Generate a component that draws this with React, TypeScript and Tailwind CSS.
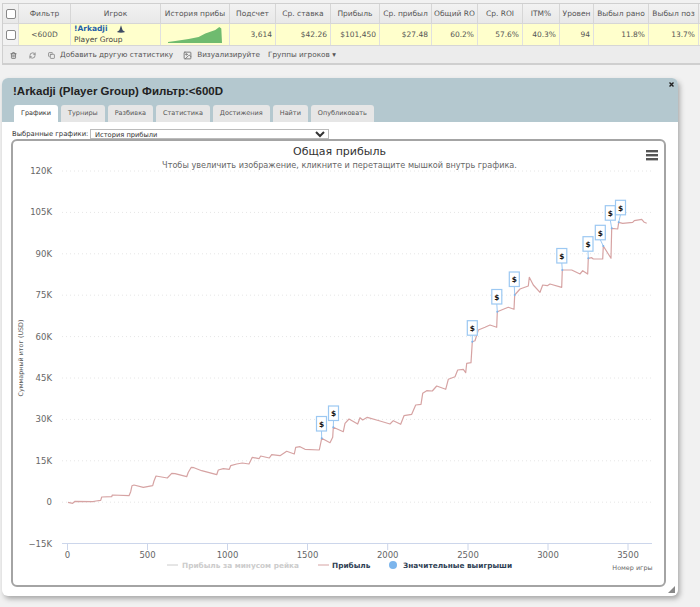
import { Copy, Image, RefreshCw, Trash2 } from 'lucide-react';

const columns = [
  { name: 'Фильтр', value: '<600D', width: 'w-[52px]', align: 'text-center' },
  { name: 'Игрок', value: '', width: 'w-[90px]', align: 'text-center' },
  { name: 'История прибы', value: '', width: 'w-[69px]', align: 'text-center' },
  { name: 'Подсчет', value: '3,614', width: 'w-[46px]', align: 'text-right' },
  { name: 'Ср. ставка', value: '$42.26', width: 'w-[55px]', align: 'text-right' },
  { name: 'Прибыль', value: '$101,450', width: 'w-[49px]', align: 'text-right' },
  { name: 'Ср. прибыл', value: '$27.48', width: 'w-[52px]', align: 'text-right' },
  { name: 'Общий RO', value: '60.2%', width: 'w-[46px]', align: 'text-right' },
  { name: 'Ср. ROI', value: '57.6%', width: 'w-[45px]', align: 'text-right' },
  { name: 'ITM%', value: '40.3%', width: 'w-[37px]', align: 'text-right' },
  { name: 'Уровен', value: '94', width: 'w-[34px]', align: 'text-right' },
  { name: 'Выбыл рано', value: '11.8%', width: 'w-[55px]', align: 'text-right' },
  { name: 'Выбыл поз', value: '13.7%', width: 'w-[50px]', align: 'text-right' },
];

const tabs = ['Турниры', 'Разбивка', 'Статистика', 'Достижения', 'Найти', 'Опубликовать'];

const yTicks = [
  { label: '120K', y: 171 },
  { label: '105K', y: 212.4 },
  { label: '90K', y: 253.8 },
  { label: '75K', y: 295.2 },
  { label: '60K', y: 336.6 },
  { label: '45K', y: 378 },
  { label: '30K', y: 419.4 },
  { label: '15K', y: 460.8 },
  { label: '0', y: 502.2 },
];

const xTicks = [
  { label: '0', x: 67.5 },
  { label: '500', x: 147.5 },
  { label: '1000', x: 227.5 },
  { label: '1500', x: 307.5 },
  { label: '2000', x: 387.7 },
  { label: '2500', x: 468 },
  { label: '3000', x: 548 },
  { label: '3500', x: 628 },
];

// traced from the chart, page coordinates
const profitLine =
  '68,502.3 72.7,503.3 75,501.3 93,501.7 96,501 100.7,500.3 101.7,497 111.7,496.7 112.3,495 129,495.7 130.7,491.7 132,485.7 134,485 143.3,487.3 152.7,485.7 154,481 156,476 167.3,478 171.7,473.3 175,473.7 186.7,476.7 188.3,472.3 191.3,467.3 194,467.7 201.7,470.7 216.7,474.7 218.3,470 223.3,468.7 229.3,469.3 230.7,465.7 236.7,464 242.3,463 249,464 252.3,457.3 259,458.7 260.7,456 269.3,458 271.7,454.7 280,455.7 286.7,451.3 294.3,454 295.7,447.3 300,446.7 305,449.3 319.3,450 321.7,438.3 330,442.7 332.7,437.3 333.3,427.3 343.3,431.7 345,423.3 349,419 357.7,424 360,417.7 362.7,420 367.3,417.3 380,421 390,424 393.3,420.7 400.7,424.3 404,415.7 411.7,414.3 415.7,405 421,404.3 422.7,393.3 426.7,390.7 432.3,391 436.7,386 445.7,389.3 448.3,379.3 455,376.7 457.7,370 463.3,369.3 465.7,372.7 466.7,363.3 471,362.7 472.3,341.7 475,340.7 478.3,330 485,327.3 490,325 496.7,327.3 497.3,311.7 503.3,309.3 508.3,307.3 514,309.3 514.7,295 520,289 528.3,286 529.3,277.3 533.3,285 540,292.3 542.7,285 547.3,285.7 550,284 561.7,287.3 562.3,270 571.7,270 580,274 582.7,270.7 587.7,274 588.3,258.3 591.7,257.7 593.3,259 602.7,259 603.3,246 611,258.3 611.7,228.3 617.7,229 618.7,222.3 622.7,223.3 632.7,222.3 634.3,220.7 641.7,219.3 644.3,222.3 646.7,223.3';

const flags = [
  { x: 316.5, y: 416.5, ax: 321.7, ay: 438.3 },
  { x: 328.5, y: 406, ax: 333.3, ay: 427.3 },
  { x: 467.3, y: 320.7, ax: 472.3, ay: 341.7 },
  { x: 491.8, y: 289.5, ax: 497.3, ay: 311.7 },
  { x: 509.3, y: 272, ax: 514.7, ay: 295 },
  { x: 556.8, y: 248.5, ax: 562.3, ay: 270 },
  { x: 583, y: 236.7, ax: 588.3, ay: 258.3 },
  { x: 595.3, y: 225.3, ax: 603.3, ay: 246 },
  { x: 605.3, y: 205.7, ax: 611.7, ay: 228.3 },
  { x: 615.5, y: 200.3, ax: 618.7, ay: 222.3 },
];

function ProfitChart() {
  return (
    <svg viewBox="13 141 651 444" className="block h-[444px] w-[651px]" fontFamily="'DejaVu Sans', sans-serif">
      <text x="339.5" y="155" textAnchor="middle" fontSize="11" fill="#333333">Общая прибыль</text>
      <text x="339.5" y="168" textAnchor="middle" fontSize="8.13" fill="#666666">
        Чтобы увеличить изображение, кликните и перетащите мышкой внутрь графика.
      </text>
      <g fill="#555555">
        <rect x="646" y="150" width="12" height="2.4" />
        <rect x="646" y="154" width="12" height="2.4" />
        <rect x="646" y="158" width="12" height="2.4" />
      </g>

      {yTicks.map((t) => (
        <g key={t.label}>
          <line x1="62" x2="652" y1={t.y} y2={t.y} stroke="#e6e6e6" strokeWidth="1" strokeDasharray="1 3" />
          <text x="52" y={t.y + 3} textAnchor="end" fontSize="8.5" fill="#666666">{t.label}</text>
        </g>
      ))}
      <text x="52" y="546.5" textAnchor="end" fontSize="8.5" fill="#666666">−15K</text>

      <line x1="62" x2="652" y1="543.5" y2="543.5" stroke="#ccd6eb" />
      {xTicks.map((t) => (
        <g key={t.label}>
          <line x1={t.x} x2={t.x} y1="543.5" y2="550" stroke="#ccd6eb" />
          <text x={t.x} y="558" textAnchor="middle" fontSize="8.5" fill="#666666">{t.label}</text>
        </g>
      ))}

      <text transform="translate(23 358) rotate(-90)" textAnchor="middle" fontSize="6.4" fill="#555555">
        Суммарный итог (USD)
      </text>
      <text x="652.5" y="570" textAnchor="end" fontSize="6.4" fill="#666666">Номер игры</text>

      <polyline points={profitLine} fill="none" stroke="#d6a3a3" strokeWidth="1.2" strokeLinejoin="round" />

      {flags.map((f) => (
        <g key={f.x}>
          <line x1={f.x + 5} y1={f.y + 14.5} x2={f.ax} y2={f.ay} stroke="#9cc8f2" />
          <circle cx={f.ax} cy={f.ay} r="1" fill="#7cb5ec" />
          <rect x={f.x} y={f.y} width="10" height="14.5" fill="#ffffff" stroke="#9cc8f2" strokeWidth="1.2" />
          <text x={f.x + 5} y={f.y + 10.3} textAnchor="middle" fontSize="7.5" fontWeight="700" fill="#111111">$</text>
        </g>
      ))}

      <line x1="167" x2="178" y1="565" y2="565" stroke="#cccccc" />
      <text x="182" y="568" fontSize="7.35" fontWeight="700" fill="#cccccc">Прибыль за минусом рейка</text>
      <line x1="318" x2="329" y1="565" y2="565" stroke="#d6a3a3" />
      <text x="332" y="568" fontSize="7.35" fontWeight="700" fill="#2f3f55">Прибыль</text>
      <circle cx="393" cy="565" r="4" fill="#7cb5ec" />
      <text x="403" y="568" fontSize="7.35" fontWeight="700" fill="#2f3f55">Значительные выигрыши</text>
    </svg>
  );
}

function WizardHat() {
  return (
    <svg viewBox="0 0 12 10" className="ml-[9px] h-[9px] w-[10px]">
      <path d="M6 0 L8 6 L11 8 Q6 10 1 8 L4 6 Z" fill="#3d4a63" />
    </svg>
  );
}

function StatsTable() {
  return (
    <div className="ml-[2px] w-[698px] border-t border-b-2 border-l border-[#cfcfcf] bg-[#ececec] font-['DejaVu_Sans',sans-serif] text-[7.5px] text-[#555]">
      <div className="flex h-[19px] bg-gradient-to-b from-[#f2f2f2] to-[#e8e8e8]">
        <div className="flex w-[16px] shrink-0 items-center justify-center border-r border-[#d6d6d6]">
          <input type="checkbox" className="h-[10px] w-[10px] appearance-none rounded-[2px] border border-[#888] bg-white" />
        </div>
        {columns.map((c) => (
          <div key={c.name} className={`${c.width} shrink-0 overflow-hidden whitespace-nowrap border-r border-[#d6d6d6] text-center leading-[19px]`}>
            {c.name}
          </div>
        ))}
      </div>
      <div className="flex h-[22px] border-t border-[#d6d6d6] bg-[#ffffcc]">
        <div className="flex w-[16px] shrink-0 items-center justify-center border-r border-[#e0e0e0] bg-[#f2f2f2]">
          <input type="checkbox" className="h-[10px] w-[10px] appearance-none rounded-[2px] border border-[#888] bg-white" />
        </div>
        {columns.map((c) => {
          if (c.name === 'Игрок') {
            return (
              <div key={c.name} className={`${c.width} shrink-0 border-r border-[#e0e0e0] pl-[3px]`}>
                <div className="flex h-[10px] items-center leading-[10px]">
                  <span className="font-bold text-[#1f5fa8]">!Arkadji</span>
                  <WizardHat />
                </div>
                <div className="leading-[12px] text-[#444]">Player Group</div>
              </div>
            );
          }
          if (c.name === 'История прибы') {
            return (
              <div key={c.name} className={`${c.width} shrink-0 border-r border-[#e0e0e0] pl-[7px] pt-[2px]`}>
                <svg viewBox="0 0 54 17" className="h-[17px] w-[54px]">
                  <path d="M0 16 L7.3 15 L20.6 13 L30.6 11 L37.3 7.5 L47.3 4 L51.3 1 L53.3 2.5 L54 17 L0 17 Z" fill="#6fbb6f" />
                </svg>
              </div>
            );
          }
          return (
            <div key={c.name} className={`${c.width} ${c.align} shrink-0 border-r border-[#e0e0e0] px-[3px] leading-[21px]`}>
              {c.value}
            </div>
          );
        })}
      </div>
      <div className="flex h-[18px] items-center border-t border-[#d6d6d6] pl-[7px] pt-px text-[7.3px] text-[#555]">
        <Trash2 size={7} strokeWidth={3} className="text-[#777]" />
        <RefreshCw size={7} strokeWidth={2.5} className="ml-[12px] text-[#777]" />
        <Copy size={7} strokeWidth={2.5} className="ml-[12px] text-[#777]" />
        <span className="ml-[5px]">Добавить другую статистику</span>
        <Image size={9} strokeWidth={2.5} className="ml-[10px] text-[#777]" />
        <span className="ml-[5px]">Визуализируйте</span>
        <span className="ml-[8px]">Группы игроков ▾</span>
      </div>
    </div>
  );
}

function ChartPanel() {
  return (
    <div className="relative ml-[2px] mt-[13px] h-[518px] w-[676px] rounded-[6px] bg-white shadow-[2px_3px_5px_#aaaaaa]">
      <div className="h-[44px] rounded-t-[6px] bg-[#b4c8cf] pl-[11px]">
        <div className="h-[27px] pt-[5px] font-['Liberation_Sans',sans-serif] text-[11.5px] font-bold leading-[16px] text-[#222]">
          !Arkadji (Player Group) Фильтр:&lt;600D
        </div>
        <div className="flex gap-[3px] pl-[1px] font-['DejaVu_Sans',sans-serif] text-[6.5px]">
          <div className="h-[17px] rounded-t-[3px] bg-white px-[7px] leading-[16px] text-[#333]">Графики</div>
          {tabs.map((t) => (
            <div key={t} className="h-[17px] rounded-t-[3px] bg-[#e6e6e6] px-[7px] leading-[16px] text-[#555]">{t}</div>
          ))}
        </div>
      </div>
      <svg viewBox="0 0 5 5" className="absolute right-[4px] top-[4px] h-[5px] w-[5px]">
        <path d="M0.5 0.5 L4.5 4.5 M4.5 0.5 L0.5 4.5" stroke="#222222" strokeWidth="1.4" />
      </svg>

      <div className="flex h-[17px] items-center pl-[10px] pt-[7px] font-['DejaVu_Sans',sans-serif] text-[6.8px] text-[#333]">
        <span className="w-[78px] shrink-0 whitespace-nowrap">Выбранные графики:</span>
        <select className="h-[10px] w-[239px] border border-[#bbb] bg-white pl-0 text-[6.7px] leading-[8px] text-[#333]">
          <option>История прибыли</option>
        </select>
      </div>

      <div className="ml-[9px] w-[655px] overflow-hidden rounded-[6px] border-2 border-[#a4a4a4] bg-white">
        <ProfitChart />
      </div>

      <svg viewBox="0 0 7 7" className="absolute bottom-[3px] right-[3px] h-[7px] w-[7px]">
        <path d="M7 0 L7 7 L0 7 Z" fill="#888888" />
      </svg>
    </div>
  );
}

export default function App() {
  return (
    <div className="h-[607px] w-[700px] overflow-hidden bg-[#f1f1f1] pt-[3px]">
      <StatsTable />
      <ChartPanel />
    </div>
  );
}
